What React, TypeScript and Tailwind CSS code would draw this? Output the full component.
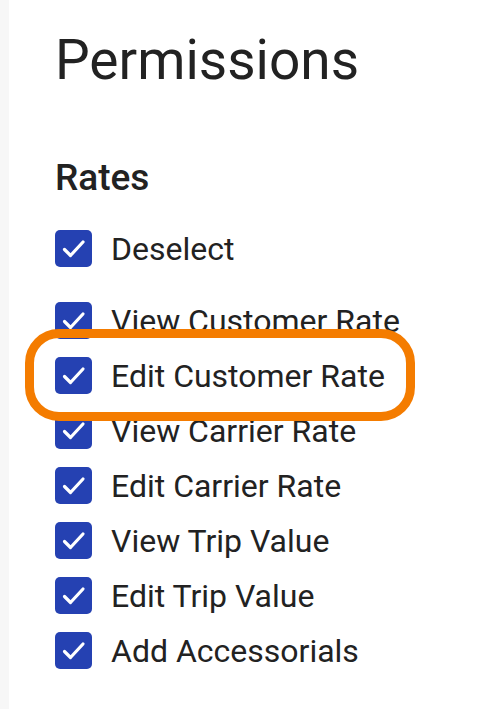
import React from "react";

const items = [
  "View Customer Rate",
  "Edit Customer Rate",
  "View Carrier Rate",
  "Edit Carrier Rate",
  "View Trip Value",
  "Edit Trip Value",
  "Add Accessorials",
];

function Check() {
  return (
    <div className="flex h-[37px] w-[37px] shrink-0 items-center justify-center rounded-[5px] bg-[#2541b2]">
      <svg width="37" height="37" viewBox="0 0 37 37" fill="none">
        <path d="M9.5 19.5 L15.5 25.5 L28 12" stroke="white" strokeWidth="3.2" strokeLinecap="round" strokeLinejoin="round" />
      </svg>
    </div>
  );
}

function Row({ label }: { label: string }) {
  return (
    <div className="flex h-[37px] items-center gap-[19px]">
      <Check />
      <span className="text-[32px] leading-none text-[#222222]">{label}</span>
    </div>
  );
}

export default function App() {
  return (
    <div className="flex h-[709px] w-[480px] bg-white" style={{ fontFamily: "Roboto, 'Noto Sans', sans-serif" }}>
      <div className="w-[9px] shrink-0 bg-[#f7f7f7]" />
      <div className="flex flex-1 flex-col pl-[46px] pt-[27px]">
        <h1 className="text-[55px] font-normal leading-[67px] text-[#222222]">Permissions</h1>
        <h2 className="mt-[63px] text-[37px] font-medium leading-[42px] text-[#222222]">Rates</h2>
        <div className="mt-[31px]">
          <Row label="Deselect" />
        </div>
        <div className="relative mt-[35px] flex flex-col gap-[18px]">
          {items.map((t) => (
            <Row key={t} label={t} />
          ))}
          <div className="pointer-events-none absolute left-[-30px] top-[27px] h-[92px] w-[390px] rounded-[34px] border-[9px] border-[#f47c00]" />
        </div>
      </div>
    </div>
  );
}
